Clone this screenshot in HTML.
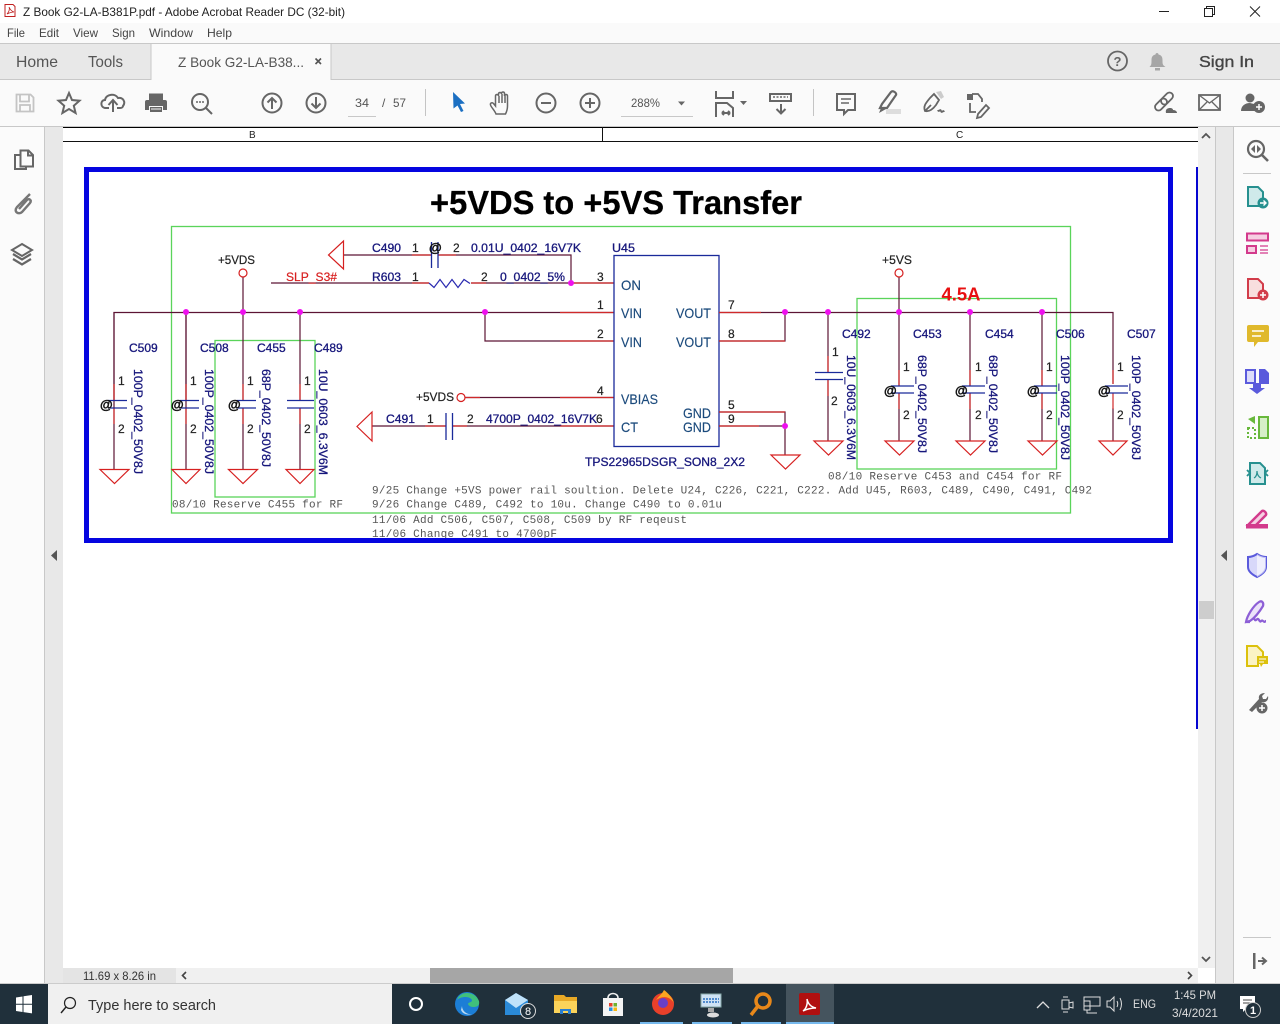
<!DOCTYPE html>
<html><head><meta charset="utf-8"><title>Z Book G2-LA-B381P.pdf - Adobe Acrobat Reader DC (32-bit)</title>
<style>
html,body{margin:0;padding:0;width:1280px;height:1024px;overflow:hidden;background:#fff}
svg{display:block}
text{font-family:"Liberation Sans",sans-serif}
.ui{fill:#444;font-size:12px}
.n{fill:#17177c;stroke:#17177c;stroke-width:.3;font-size:12px}
.k{fill:#222;stroke:#222;stroke-width:.2;font-size:12px}
.p{fill:#1b4a7c;stroke:#1b4a7c;stroke-width:.15;font-size:14px}
.m{font-family:"Liberation Mono",monospace;fill:#555;font-size:11px}
.w{stroke:#5c1434;stroke-width:1.2;fill:none}
.r{stroke:#d02a2a;stroke-width:1.2;fill:none}
.b{stroke:#1a2a9a;stroke-width:1.3;fill:none}
.g{stroke:#5ad45a;stroke-width:1.3;fill:none}
.t{stroke:#d62020;stroke-width:1.2;fill:none}
.d{fill:#ee10ee}
.i{fill:none;stroke:#666;stroke-width:2}
.f{fill:#666}
.at{fill:#111;stroke:#111;stroke-width:.4;font-size:13px;font-weight:bold}
</style></head><body>
<svg width="1280" height="1024" viewBox="0 0 1280 1024" xmlns="http://www.w3.org/2000/svg">
<rect width="1280" height="1024" fill="#fff"/>
<!-- menu -->
<rect y="23" width="1280" height="20" fill="#fafafa"/>
<rect y="43" width="1280" height="1" fill="#c8c8c8"/>
<rect y="44" width="1280" height="35" fill="#e8e8e8"/>
<rect y="79" width="1280" height="1" fill="#c8c8c8"/>
<rect y="80" width="1280" height="46" fill="#fafafa"/>
<rect y="126" width="1280" height="1" fill="#c8c8c8"/>
<rect x="151" y="44" width="180" height="36" fill="#fafafa"/>
<path d="M151 44V80M331 44V80" stroke="#c8c8c8"/>
<!-- title -->
<path d="M5 4.500h8l2 2v10h-10z" fill="#fff" stroke="#c02020"/><path d="M7 14c2-2 3-5 2-7 1 2 2 4 5 5-3 0-5 1-7 2z" fill="none" stroke="#c02020" stroke-width=".8"/>
<text x="23" y="16" class="ui" style="fill:#222" textLength="322" lengthAdjust="spacingAndGlyphs">Z Book G2-LA-B381P.pdf - Adobe Acrobat Reader DC (32-bit)</text>
<path d="M1159 11.500h10" stroke="#222"/><path d="M1204.500 8.500h8v8h-8z M1206.500 8.500v-2h8v8h-2" fill="none" stroke="#222"/><path d="M1250 6.500l10 10M1260 6.500l-10 10" stroke="#222"/>
<text x="7" y="37" class="ui" textLength="18" lengthAdjust="spacingAndGlyphs">File</text><text x="39" y="37" class="ui" textLength="20" lengthAdjust="spacingAndGlyphs">Edit</text><text x="73" y="37" class="ui" textLength="25" lengthAdjust="spacingAndGlyphs">View</text><text x="112" y="37" class="ui" textLength="23" lengthAdjust="spacingAndGlyphs">Sign</text><text x="149" y="37" class="ui" textLength="44" lengthAdjust="spacingAndGlyphs">Window</text><text x="207" y="37" class="ui" textLength="25" lengthAdjust="spacingAndGlyphs">Help</text>
<!-- tabs -->
<text x="16" y="67" style="fill:#555;font-size:16px" textLength="42" lengthAdjust="spacingAndGlyphs">Home</text>
<text x="88" y="67" style="fill:#555;font-size:16px" textLength="35" lengthAdjust="spacingAndGlyphs">Tools</text>
<text x="178" y="67" style="fill:#555;font-size:14px" textLength="126" lengthAdjust="spacingAndGlyphs">Z Book G2-LA-B38...</text>
<path d="M315.500 58.500l5.500 5.500M321 58.500l-5.500 5.500" stroke="#555" stroke-width="1.600"/>
<circle cx="1117.500" cy="61" r="9.500" fill="none" stroke="#666" stroke-width="1.800"/><text x="1113.500" y="66" style="fill:#666;font-size:13px;font-weight:bold">?</text>
<path d="M1149.500 67c2-2 2-3 2-7 0-4 2-5 4-5.500 0-2 3-2 3 0 2 .5 4 1.500 4 5.500 0 4 0 5 3 7z" fill="#a6a6a6"/><rect x="1155" y="68" width="5" height="2.500" fill="#a6a6a6"/>
<text x="1199" y="67" style="fill:#444;stroke:#444;stroke-width:.35;font-size:16px" textLength="55" lengthAdjust="spacingAndGlyphs">Sign In</text>
<!-- toolbar icons -->
<path d="M16.500 94.500h14l3 3v14h-17zM20 94.500v7h9v-7M20 111v-6h10v6" fill="none" stroke="#c4c4c4" stroke-width="1.800"/>
<path d="M69 93l3 7 7.500.7-5.700 5 1.800 7.300-6.600-4-6.600 4 1.800-7.300-5.700-5 7.500-.7z" class="i" stroke-width="1.700"/>
<path d="M109 108h-3c-6 0-6-8-1-8 1-6 10-7 13-2 5-1 8 4 5 8 0 1-1 2-3 2h-3M113 112v-11M108.500 105l4.500-5 4.500 5" class="i"/>
<path d="M149 100v-6.500h14V100zM147 100h18a2 2 0 0 1 2 2v8h-4v-4h-14v4h-4v-8a2 2 0 0 1 2-2zM150 107h12v5h-12z" fill="#666"/><path d="M151 109h10" stroke="#fafafa"/>
<circle cx="200" cy="102" r="8" class="i"/><path d="M206 108l6 6" class="i" stroke-width="2.400"/><circle cx="197" cy="102" r="1" class="f"/><circle cx="200" cy="102" r="1" class="f"/><circle cx="203" cy="102" r="1" class="f"/>
<circle cx="272" cy="103" r="9.500" class="i"/><path d="M272 109v-11M267.500 102.500l4.500-4.500 4.500 4.500" class="i"/>
<circle cx="316" cy="103" r="9.500" class="i"/><path d="M316 97v11M311.500 103.500l4.500 4.500 4.500-4.500" class="i"/>
<text x="355" y="107" class="ui" style="fill:#555" textLength="14" lengthAdjust="spacingAndGlyphs">34</text>
<text x="382" y="107" class="ui" style="fill:#555">/</text>
<text x="393" y="107" class="ui" style="fill:#555" textLength="13" lengthAdjust="spacingAndGlyphs">57</text>
<rect x="348" y="116" width="28" height="1" fill="#c8c8c8"/>
<rect x="425" y="89" width="1" height="27" fill="#c4c4c4"/>
<path d="M453 92l12 11.500-5 .5 3.500 7-2.500 1-3.500-6.500-4 3z" fill="#1b6fc2"/>
<path d="M496 114c-1-3-5-7-5.500-9-.5-2 1.500-3 3-1.500l2 2.500V96c0-2 3-2 3 0v-2c0-2 3-2 3 0v-.5c0-2 3-2 3 0V96c0-2 3-2 3 0v10c0 3-1 6-2 8zM499 96v7M502 94v9M505 94v9" fill="none" stroke="#666" stroke-width="1.500"/>
<circle cx="546" cy="103" r="9.500" class="i"/><path d="M541 103h10" class="i"/>
<circle cx="590" cy="103" r="9.500" class="i"/><path d="M585 103h10M590 98v10" class="i"/>
<text x="631" y="107" class="ui" style="fill:#555" textLength="29" lengthAdjust="spacingAndGlyphs">288%</text>
<path d="M678 101.500h7l-3.500 4z" fill="#666"/>
<rect x="621" y="116" width="72" height="1" fill="#c8c8c8"/>
<path d="M716 91v7h17v-7M716 117v-14h11l6 5v9M722 113h8M722 113l2-2M722 113l2 2M730 113l-2-2M730 113l-2 2" class="i" stroke-width="1.500"/>
<path d="M740 101h7l-3.500 4z" fill="#666"/>
<path d="M770 94h21v7h-21z" fill="none" stroke="#666" stroke-width="2"/><path d="M773 97h15" stroke="#666" stroke-width="1.500" stroke-dasharray="2 1.500"/><path d="M781 104v9M776.500 109l4.500 4.500 4.500-4.500" class="i"/>
<rect x="813" y="89" width="1" height="27" fill="#c4c4c4"/>
<path d="M837 94h18v16h-7l-4 4v-4h-7z" class="i"/><path d="M841 99h10M841 103h8" stroke="#666" stroke-width="1.400"/>
<path d="M880 108l2-4 9-12c2-2 6 1 5 3l-9 13z" fill="none" stroke="#666" stroke-width="2.200"/><path d="M879 113l2-5 5 1z" fill="#666"/><rect x="886" y="109" width="15" height="5" fill="#ddd"/>
<path d="M925 111c-2-5 1-8 5-13l4-4 5 6-3 5c-3 4-7 7-11 6zM925 111l6-6M938 110c1 3 2-2 3 1s2-2 3 1" fill="none" stroke="#666" stroke-width="1.800"/><path d="M936 92l5-1 3 6-3 2z" fill="#ccc"/>
<path d="M967 94h6v6h-6z" fill="#666"/><path d="M972 94h6l4 5v3M970 103v9h6M978 114l8-9 3 3-8 9-4 1z" fill="none" stroke="#666" stroke-width="1.800"/>
<g fill="none" stroke="#666" stroke-width="1.800"><rect x="1154" y="101" width="14" height="7" rx="3.500" transform="rotate(-45 1161 104.500)"/><rect x="1160" y="95" width="14" height="7" rx="3.500" transform="rotate(-45 1167 98.500)"/></g><path d="M1166 113c-1-4 2-5 4-5 2 0 3 1 3 2 4 0 4 3 4 3z" fill="#666"/>
<rect x="1199" y="95" width="21" height="15" fill="none" stroke="#666" stroke-width="1.800"/><path d="M1199 95l10.500 8 10.500-8M1199 110l8-8M1220 110l-8-8" fill="none" stroke="#666" stroke-width="1.300"/>
<circle cx="1250" cy="98" r="4.500" class="f"/><path d="M1241 111c0-5 4-8 9-8l4 1 1 7z" class="f"/><circle cx="1259" cy="107" r="6" fill="#666"/><path d="M1256 107h6M1259 104v6" stroke="#fff" stroke-width="1.500"/>
<!-- left panel -->
<rect x="0" y="127" width="44" height="857" fill="#fbfbfb"/>
<rect x="44" y="127" width="1" height="857" fill="#c8c8c8"/>
<rect x="45" y="127" width="18" height="857" fill="#e8e8e8"/>
<path d="M57 550v11l-6-5.500z" fill="#555"/>
<path d="M20.500 150.500h8l4.500 4.500v11.500H20.500zM20.500 155H15v14h11v-2.500M28 150.500v5h5" fill="none" stroke="#666" stroke-width="2"/>
<path d="M31 199l-13 13c-4 5 2 8 5 5l8-9c2-3-1-5-3-3l-8 9" transform="translate(-1 -5)" fill="none" stroke="#777" stroke-width="2.400"/>
<path d="M22 244l10 6-10 6-10-6z" fill="none" stroke="#666" stroke-width="2"/><path d="M13 254l9 5.500 9-5.500M13 259l9 5.500 9-5.500" fill="none" stroke="#666" stroke-width="2.200"/>
<!-- page header -->
<rect x="63" y="127" width="1135" height="1" fill="#000"/>
<rect x="63" y="141" width="1135" height="1" fill="#111"/>
<rect x="602" y="127" width="1" height="14" fill="#111"/>
<text x="249" y="138" style="fill:#222;font-size:10px">B</text><text x="956" y="138" style="fill:#222;font-size:10px">C</text>
<!-- notes (under blue frame) -->
<text x="172" y="507.500" class="m" textLength="171">08/10 Reserve C455 for RF</text>
<text x="828" y="479.500" class="m" textLength="234">08/10 Reserve C453 and C454 for RF</text>
<text x="372" y="493.500" class="m" textLength="720">9/25 Change +5VS power rail soultion. Delete U24, C226, C221, C222. Add U45, R603, C489, C490, C491, C492</text>
<text x="372" y="507.500" class="m" textLength="350">9/26 Change C489, C492 to 10u. Change C490 to 0.01u</text>
<text x="372" y="523" class="m" textLength="315">11/06 Add C506, C507, C508, C509 by RF reqeust</text>
<text x="372" y="537" class="m" textLength="185">11/06 Change C491 to 4700pF</text>
<!-- frame -->
<rect x="86.500" y="169.500" width="1084" height="371" fill="none" stroke="#0505e0" stroke-width="5"/>
<rect x="1196" y="167" width="2" height="562" fill="#0505d0"/>
<text x="430" y="214" style="fill:#000;stroke:#000;stroke-width:.3;font-size:33px;font-weight:bold" textLength="372" lengthAdjust="spacingAndGlyphs">+5VDS to +5VS Transfer</text>
<!-- green boxes -->
<rect x="171.500" y="226.500" width="899" height="286.500" class="g"/>
<rect x="215" y="340.500" width="100" height="156.500" class="g"/>
<rect x="857" y="298.500" width="199.500" height="170.500" class="g"/>
<!-- top wires -->
<path d="M114 470V312.500H614M186 312.500V470M243 277V400M243 408V470M300 312.500V400M300 408V470" class="w"/>
<path d="M186 400V312M114 400V312" class="w"/>
<path d="M485 312.500V341H614" class="w"/>
<path d="M560 312.500h54M560 341h54M114 384v16M114 408v16M186 384v16M186 408v16M243 384v16M243 408v16M300 384v16M300 408v16" class="r"/>
<path d="M344 255h87M438 255h133V283M271 283H429M471 283H614" class="w"/>
<path d="M412 255h19M438 255h18M412 283h17M471 283h15M571 283h43" class="r"/>
<path d="M429 283l5 4.500 6-8 6 8 6-8 6 8 6-8 6 4" fill="none" stroke="#2a2ab0" stroke-width="1.200"/>
<path d="M431.500 242v26M438 242v26" class="b"/>
<path d="M343.500 241v28l-15-14z" class="t"/>
<circle cx="243" cy="273" r="4" fill="#fff" class="t"/>
<path d="M465 397.500H614" class="w"/><path d="M465 397.500h15M560 397.500h54" class="r"/>
<circle cx="461" cy="397.500" r="4" fill="#fff" class="t"/>
<path d="M372 426H446M452.500 426H614" class="w"/><path d="M425 426h21M453 426h14M560 426h54" class="r"/>
<path d="M446 413v27M452.500 413v27" class="b"/>
<path d="M372 412v29l-15-14.500z" class="t"/>
<!-- left caps -->
<path d="M108 400.500h19M108 408h19M180 400.500h19M180 408h19M237 400.500h19M237 408h19M287 400.500h27M287 408h27" class="b"/>
<path d="M100 469.500h29l-14.500 14zM172 469.500h28l-14 14zM228.500 469.500h29l-14.500 14zM286 469.500h28l-14 14z" class="t"/>
<!-- U45 -->
<rect x="614" y="255.500" width="105" height="191" class="b"/>
<text x="612" y="252" class="n" textLength="23" lengthAdjust="spacingAndGlyphs">U45</text>
<text x="621" y="290" class="p" textLength="20" lengthAdjust="spacingAndGlyphs">ON</text><text x="621" y="318" class="p" textLength="21" lengthAdjust="spacingAndGlyphs">VIN</text><text x="621" y="347" class="p" textLength="21" lengthAdjust="spacingAndGlyphs">VIN</text><text x="621" y="404" class="p" textLength="37" lengthAdjust="spacingAndGlyphs">VBIAS</text><text x="621" y="432" class="p" textLength="17" lengthAdjust="spacingAndGlyphs">CT</text><text x="676" y="318" class="p" textLength="35" lengthAdjust="spacingAndGlyphs">VOUT</text><text x="676" y="347" class="p" textLength="35" lengthAdjust="spacingAndGlyphs">VOUT</text><text x="683" y="418" class="p" textLength="28" lengthAdjust="spacingAndGlyphs">GND</text><text x="683" y="432" class="p" textLength="28" lengthAdjust="spacingAndGlyphs">GND</text>
<text x="585" y="466" class="n" textLength="160" lengthAdjust="spacingAndGlyphs">TPS22965DSGR_SON8_2X2</text>
<!-- right wires -->
<path d="M719 312.500H1113V384M1113 408V441M785 312.500V341H719M719 412H785V455M719 426H785M828 312.500V372M828 380V441M899 277V386M899 393V441M970 312.500V386M970 393V441M1042 312.500V386M1042 393V441" class="w"/>
<path d="M719 312.500h42M719 341h66M719 412h66M719 426h40M828 356v16M828 380v16M899 370v16M899 393v16M970 370v16M970 393v16M1042 370v16M1042 393v16M1113 370v14M1113 393v16" class="r"/>
<circle cx="899" cy="273" r="4" fill="#fff" class="t"/>
<path d="M815 372.500h28M815 379.500h28M891 386h23M891 393h23M962 386h23M962 393h23M1034 386h23M1034 393h23M1105 386h23M1105 393h23" class="b"/>
<path d="M814 441h29l-14.500 14zM885 441h29l-14.500 14zM956 441h29l-14.500 14zM1028 441h29l-14.500 14zM1099 441h28l-14 14zM771 455h29l-14.500 14z" class="t"/>
<g class="d"><circle cx="186" cy="312" r="3"/><circle cx="243" cy="312" r="3"/><circle cx="300" cy="312" r="3"/><circle cx="485" cy="312" r="3"/><circle cx="571" cy="283" r="3"/><circle cx="785" cy="312" r="3"/><circle cx="828" cy="312" r="3"/><circle cx="899" cy="312" r="3"/><circle cx="970" cy="312" r="3"/><circle cx="1042" cy="312" r="3"/><circle cx="785" cy="426" r="3"/></g>
<!-- labels -->
<text x="372" y="252" class="n" textLength="29" lengthAdjust="spacingAndGlyphs">C490</text>
<text x="412" y="252" class="k">1</text><text x="429" y="252" class="at">@</text><text x="453" y="252" class="k">2</text>
<text x="471" y="252" class="n" textLength="110" lengthAdjust="spacingAndGlyphs">0.01U_0402_16V7K</text>
<text x="286" y="281" style="fill:#d82020;stroke:#d82020;stroke-width:.2;font-size:12px" textLength="51" lengthAdjust="spacingAndGlyphs">SLP_S3#</text>
<text x="372" y="281" class="n" textLength="29" lengthAdjust="spacingAndGlyphs">R603</text>
<text x="412" y="281" class="k">1</text><text x="481" y="281" class="k">2</text>
<text x="500" y="281" class="n" textLength="65" lengthAdjust="spacingAndGlyphs">0_0402_5%</text>
<text x="218" y="264" class="k" textLength="37" lengthAdjust="spacingAndGlyphs">+5VDS</text>
<text x="882" y="264" class="k" textLength="30" lengthAdjust="spacingAndGlyphs">+5VS</text>
<text x="416" y="401" class="k" textLength="38" lengthAdjust="spacingAndGlyphs">+5VDS</text>
<text x="386" y="423" class="n" textLength="29" lengthAdjust="spacingAndGlyphs">C491</text>
<text x="427" y="423" class="k">1</text><text x="467" y="423" class="k">2</text>
<text x="486" y="423" class="n" textLength="111" lengthAdjust="spacingAndGlyphs">4700P_0402_16V7K</text>
<text x="941.500" y="300.500" style="fill:#e81010;font-size:18px;font-weight:bold" textLength="39" lengthAdjust="spacingAndGlyphs">4.5A</text>
<text x="597" y="281" class="k">3</text><text x="597" y="309" class="k">1</text><text x="597" y="338" class="k">2</text><text x="597" y="395" class="k">4</text><text x="596" y="423" class="k">6</text><text x="728" y="309" class="k">7</text><text x="728" y="338" class="k">8</text><text x="728" y="409" class="k">5</text><text x="728" y="423" class="k">9</text>
<text x="129" y="352" class="n">C509</text><text x="200" y="352" class="n">C508</text><text x="257" y="352" class="n">C455</text><text x="314" y="352" class="n">C489</text>
<text x="842" y="338" class="n">C492</text><text x="913" y="338" class="n">C453</text><text x="985" y="338" class="n">C454</text><text x="1056" y="338" class="n">C506</text><text x="1127" y="338" class="n">C507</text>
<text x="118" y="385" class="k">1</text><text x="118" y="433" class="k">2</text><text x="190" y="385" class="k">1</text><text x="190" y="433" class="k">2</text><text x="247" y="385" class="k">1</text><text x="247" y="433" class="k">2</text><text x="304" y="385" class="k">1</text><text x="304" y="433" class="k">2</text>
<text x="832" y="356" class="k">1</text><text x="831" y="405" class="k">2</text><text x="903" y="371" class="k">1</text><text x="903" y="419" class="k">2</text><text x="975" y="371" class="k">1</text><text x="975" y="419" class="k">2</text><text x="1046" y="371" class="k">1</text><text x="1046" y="419" class="k">2</text><text x="1117" y="371" class="k">1</text><text x="1117" y="419" class="k">2</text>
<text x="100" y="409" class="at">@</text><text x="171" y="409" class="at">@</text><text x="228" y="409" class="at">@</text><text x="884" y="395" class="at">@</text><text x="955" y="395" class="at">@</text><text x="1027" y="395" class="at">@</text><text x="1098" y="395" class="at">@</text>
<text transform="translate(134 369) rotate(90)" class="n" textLength="105" lengthAdjust="spacingAndGlyphs">100P_0402_50V8J</text>
<text transform="translate(205 369) rotate(90)" class="n" textLength="105" lengthAdjust="spacingAndGlyphs">100P_0402_50V8J</text>
<text transform="translate(262 369) rotate(90)" class="n" textLength="98" lengthAdjust="spacingAndGlyphs">68P_0402_50V8J</text>
<text transform="translate(319 369) rotate(90)" class="n" textLength="106" lengthAdjust="spacingAndGlyphs">10U_0603_6.3V6M</text>
<text transform="translate(847 355) rotate(90)" class="n" textLength="105" lengthAdjust="spacingAndGlyphs">10U_0603_6.3V6M</text>
<text transform="translate(918 355) rotate(90)" class="n" textLength="98" lengthAdjust="spacingAndGlyphs">68P_0402_50V8J</text>
<text transform="translate(989 355) rotate(90)" class="n" textLength="98" lengthAdjust="spacingAndGlyphs">68P_0402_50V8J</text>
<text transform="translate(1061 355) rotate(90)" class="n" textLength="105" lengthAdjust="spacingAndGlyphs">100P_0402_50V8J</text>
<text transform="translate(1132 355) rotate(90)" class="n" textLength="105" lengthAdjust="spacingAndGlyphs">100P_0402_50V8J</text>
<!-- vertical scrollbar + right strip -->
<rect x="1198" y="127" width="17" height="841" fill="#f0f0f0"/>
<rect x="1199" y="601" width="15" height="18" fill="#cdcdcd"/>
<path d="M1202 138l4-4 4 4M1202 957l4 4 4-4" fill="none" stroke="#555" stroke-width="1.800"/>
<rect x="1215" y="127" width="1" height="857" fill="#c8c8c8"/>
<rect x="1216" y="127" width="17" height="857" fill="#e8e8e8"/>
<rect x="1233" y="127" width="1" height="857" fill="#c8c8c8"/>
<rect x="1234" y="127" width="46" height="857" fill="#fbfbfb"/>
<path d="M1227 550v11l-6-5.500z" fill="#555"/>
<!-- right panel icons -->
<circle cx="1256" cy="149" r="8" fill="none" stroke="#666" stroke-width="2.200"/><path d="M1262 155l6 6" stroke="#666" stroke-width="2.600"/><path d="M1255 145v8l-4-4zM1257 145v8l4-4z" fill="#666"/>
<rect x="1243" y="173" width="28" height="1" fill="#c8c8c8"/>
<path d="M1248 187h10l5 5v14h-15z" fill="#cfeaea" stroke="#26908f" stroke-width="2"/><circle cx="1263" cy="203" r="5.500" fill="#26908f"/><path d="M1260 203h6M1263.500 200.500l2.500 2.500-2.500 2.500" fill="none" stroke="#fff" stroke-width="1.400"/>
<path d="M1247 233.500h21v7h-21z" fill="#f6cfe2" stroke="#d33a8c" stroke-width="2"/><path d="M1247 246h9v7h-9z" fill="#f6cfe2" stroke="#d33a8c" stroke-width="2"/><path d="M1260 246h8M1260 250h8M1260 253h8" stroke="#d33a8c" stroke-width="1.200"/>
<path d="M1248 279h10l5 5v14h-15z" fill="#f8dede" stroke="#d23c4a" stroke-width="2"/><circle cx="1263" cy="295" r="5.500" fill="#d23c4a"/><path d="M1260 295h6M1263 292v6" stroke="#fff" stroke-width="1.500"/>
<path d="M1249 325h18a2 2 0 0 1 2 2v13a2 2 0 0 1-2 2h-9l-4 5v-5h-5a2 2 0 0 1-2-2v-13a2 2 0 0 1 2-2z" fill="#e0b92c"/><path d="M1252 331h12M1252 336h9" stroke="#fff" stroke-width="1.600"/>
<path d="M1246 370h9v13h-9z" fill="#dcdcfa" stroke="#5a5adc" stroke-width="2"/><path d="M1259 369h6l4 4v11h-10z" fill="#5a5adc"/><path d="M1253 383h8v5h4l-8 6-8-6h4z" fill="#5a5adc"/>
<path d="M1259 417h9v21h-9z" fill="#d6efc8" stroke="#68b83c" stroke-width="2"/><path d="M1248 428h7v10h-7z" fill="none" stroke="#68b83c" stroke-width="2" stroke-dasharray="2 2"/><path d="M1248 419l7-3v8z" fill="#68b83c"/>
<path d="M1250 463h10l5 5v16h-15z" fill="#cfeaea" stroke="#26908f" stroke-width="2"/><path d="M1247 470l3 3-3 3M1268 470l-3 3 3 3" fill="none" stroke="#26908f" stroke-width="1.800"/><path d="M1254 478c2-1 3-3 3-7 0 4 2 6 4 7" fill="none" stroke="#26908f" stroke-width="1.200"/>
<path d="M1248 525l14-14c2-1 5 2 4 4l-11 11z" fill="#f6cfe2" stroke="#d33a8c" stroke-width="2.400"/><path d="M1246 524h22v4.500h-22z" fill="#d33a8c"/>
<path d="M1257 554c3 2 6 3 9 3v10c0 5-5 8-9 10-4-2-9-5-9-10v-10c3 0 6-1 9-3z" fill="#d8d8fa" stroke="#5a5adc" stroke-width="2"/>
<path d="M1257 554v23c4-2 9-5 9-10v-10c-3 0-6-1-9-3z" fill="#fff" opacity=".6"/>
<path d="M1246 622c1-6 7-16 13-20 3-2 5 1 4 4-3 5-7 11-13 15zM1246 622h4M1254 618c2 6 3-2 5 2s2-1 4 1 2 0 3 0" fill="#ece3f9" stroke="#8d5fd6" stroke-width="2.200"/>
<path d="M1247 646h10l6 6v6h-5v8h-11z" fill="#fbf3c4" stroke="#dcc10c" stroke-width="2"/><rect x="1257" y="656" width="11" height="8" fill="#dcc10c"/><path d="M1259 659h7M1259 662h5" stroke="#fff"/><path d="M1260 664h3l-2 3z" fill="#dcc10c"/>
<path d="M1249 710l10-11c-1-4 2-6 6-6l-3 3 1 3 3 0 2-3c1 4-2 7-6 6l-10 10z" fill="#666"/><circle cx="1262" cy="708" r="5.500" fill="#666"/><path d="M1259 708h6M1262 705v6" stroke="#fff" stroke-width="1.500"/>
<rect x="1243" y="937" width="28" height="1" fill="#c8c8c8"/>
<rect x="1253" y="953" width="2.500" height="16" fill="#666"/><path d="M1258 961h7M1262 957.500l4 3.500-4 3.500" fill="none" stroke="#666" stroke-width="2"/>
<!-- bottom scrollbar -->
<rect x="63" y="968" width="1135" height="16" fill="#f0f0f0"/>
<rect x="63" y="968" width="113" height="16" fill="#e4e4e4"/>
<text x="83" y="980" class="ui" style="fill:#333" textLength="73" lengthAdjust="spacingAndGlyphs">11.69 x 8.26 in</text>
<path d="M186 972l-3.500 3.500 3.500 3.500M1188 972l3.500 3.500-3.500 3.500" fill="none" stroke="#444" stroke-width="1.600"/>
<rect x="430" y="968" width="303" height="15" fill="#a6a6a6"/>
<rect y="983" width="1280" height="1" fill="#ccc"/>
<!-- taskbar -->
<rect y="984" width="1280" height="40" fill="#20303b"/>
<rect x="48" y="984" width="344" height="40" fill="#f0f0f0"/>
<path d="M16 997.500l6.500-1v7.200H16zM23.500 996.300l8.500-1.300v8.700h-8.500zM16 1004.700h6.500v7.300l-6.500-1zM23.500 1004.700H32v8.700l-8.500-1.300z" fill="#fff"/>
<circle cx="70" cy="1003" r="5.500" fill="none" stroke="#222" stroke-width="1.200"/><path d="M66 1007l-5 6" stroke="#222" stroke-width="1.400"/>
<text x="88" y="1010" style="fill:#333;font-size:14.500px" textLength="128" lengthAdjust="spacingAndGlyphs">Type here to search</text>
<circle cx="416" cy="1004" r="6" fill="none" stroke="#fff" stroke-width="2"/>
<circle cx="467" cy="1004" r="12" fill="#1c7ed6"/><path d="M457 1000c3-10 18-9 22 1 1 5-2 6-6 6-4 0-5-3-5-3 0-2 4-1 4-4-2-4-11-4-15 0z" fill="#40c07c"/><path d="M462 1006c0 5 5 9 10 8-3 1-9 1-11-4z" fill="#fff" opacity=".7"/>
<path d="M505 1000l11-7 12 7v15h-23z" fill="#2a8ad8"/><path d="M505 1000l11 8 12-8-12-7z" fill="#bfe2fa"/><circle cx="528" cy="1011" r="7.500" fill="#20303b" stroke="#ddd"/><text x="525" y="1015" style="fill:#fff;font-size:11px">8</text>
<path d="M554 995h10l2 2h11v16h-23z" fill="#e8a926"/><path d="M554 1001h23v12h-23z" fill="#fbd35a"/><path d="M560 1009h11v5h-3v-3h-5v3h-3z" fill="#2a7fd0"/>
<path d="M603 998h20v18h-20z" fill="#f4f4f4"/><path d="M608 998c0-6 10-6 10 0" fill="none" stroke="#eee" stroke-width="1.600"/><rect x="609" y="1003" width="3.500" height="3.500" fill="#e8402a"/><rect x="613.500" y="1003" width="3.500" height="3.500" fill="#70b030"/><rect x="609" y="1007.500" width="3.500" height="3.500" fill="#2a90e0"/><rect x="613.500" y="1007.500" width="3.500" height="3.500" fill="#f8b810"/>
<g transform="translate(0 -3)"><circle cx="663" cy="1007" r="11" fill="#e8402a"/><path d="M656 1003c3-4 6-6 8-10 4 3 8 7 10 13-4-6-10-8-18-3z" fill="#fba520"/><circle cx="663" cy="1006" r="5" fill="#6a3fc8"/></g>
<rect x="701" y="994" width="20" height="13" fill="#cfe3f5" stroke="#8aa"/><path d="M703 999h16M703 1002h16" stroke="#2a70c0" stroke-width="1.500" stroke-dasharray="2 1"/><path d="M708 1008h6v4h-6z" fill="#aaa"/><ellipse cx="713" cy="1015" rx="6" ry="2.500" fill="#ddd"/>
<circle cx="763" cy="1001" r="7" fill="none" stroke="#e8881a" stroke-width="3.500"/><path d="M758 1006l-7 9" stroke="#e8881a" stroke-width="3.500"/>
<rect x="786" y="984" width="48" height="40" fill="#45545e"/>
<rect x="799" y="993" width="21" height="22" rx="2" fill="#b01010"/><path d="M803 1011c3-2 5-7 4-12 1 5 4 8 9 9-5 0-9 1-13 3z" fill="none" stroke="#fff" stroke-width="1.500"/>
<path d="M640 1022h43v2h-43zM692 1022h40v2h-40zM741 1022h40v2h-40zM786 1022h48v2h-48z" fill="#76b9ed"/>
<path d="M1037 1008l6-6 6 6" fill="none" stroke="#ddd" stroke-width="1.300"/>
<path d="M1062 1000h7v9h-7zM1069 1003l4-1v6l-4-1M1063 997h5M1063 1012h5" fill="none" stroke="#ddd" stroke-width="1"/>
<path d="M1084 997h16v9h-16zM1084 1001h6v9h-6zM1087 1010v3h10" fill="none" stroke="#ddd" stroke-width="1"/>
<path d="M1107 1001h3l4-4v14l-4-4h-3zM1117 1001c1 2 1 4 0 6M1120 998c2 4 2 8 0 12" fill="none" stroke="#ddd" stroke-width="1"/>
<text x="1133" y="1008" style="fill:#ddd;font-size:12px" textLength="23" lengthAdjust="spacingAndGlyphs">ENG</text>
<text x="1174" y="999" style="fill:#ddd;font-size:12px" textLength="42" lengthAdjust="spacingAndGlyphs">1:45 PM</text>
<text x="1172" y="1017" style="fill:#ddd;font-size:12px" textLength="46" lengthAdjust="spacingAndGlyphs">3/4/2021</text>
<path d="M1240 996h15v13h-9l-3 3v-3h-3z" fill="#fff"/><path d="M1243 1000h9M1243 1003h9" stroke="#444"/>
<circle cx="1253" cy="1010" r="7.500" fill="#20303b" stroke="#ccc"/><text x="1250" y="1014" style="fill:#fff;font-size:11px;font-weight:bold">1</text>
</svg>
</body></html>
